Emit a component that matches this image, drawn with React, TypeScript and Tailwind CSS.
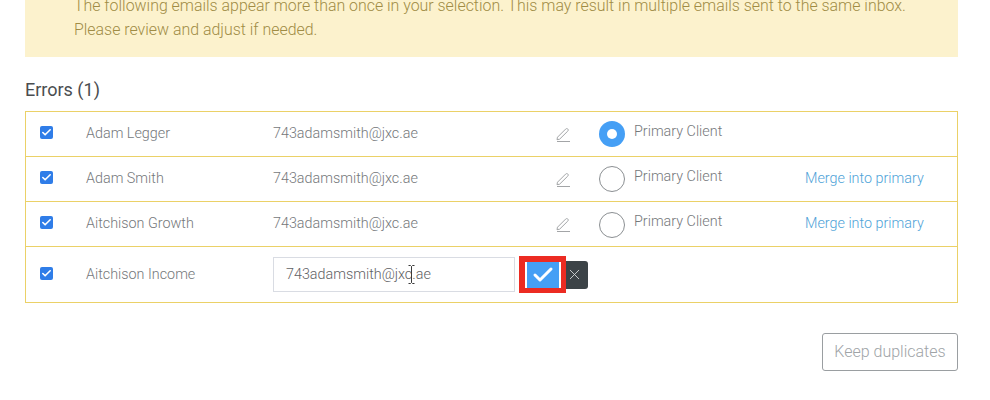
import { Check, X } from "lucide-react";

const rows = [
  { name: "Adam Legger", primary: true, extra: "" },
  { name: "Adam Smith", primary: false, extra: "" },
  { name: "Aitchison Growth", primary: false, extra: "pt-[1px]" },
];

function Checkbox() {
  return (
    <div className="flex h-[13px] w-[13px] items-center justify-center rounded-[2px] bg-[#2f7de8]">
      <Check size={11} strokeWidth={3.5} className="text-white" />
    </div>
  );
}

function Pencil() {
  return (
    <svg width="15" height="15" viewBox="0 0 15 15" fill="none" stroke="#a3a5a7" strokeWidth="1">
      <path d="M1.5 10.2 9.6 2.1c.7-.7 1.6-.7 2.2-.1.6.6.6 1.5-.1 2.2L3.6 12.2l-2.6.5.5-2.5Z" />
      <path d="M1 14.5h13" />
    </svg>
  );
}

function Radio({ on }: { on: boolean }) {
  if (on) {
    return (
      <div className="flex h-[26px] w-[26px] items-center justify-center rounded-full bg-[#459ff5]">
        <div className="h-[10px] w-[10px] rounded-full bg-white" />
      </div>
    );
  }
  return <div className="h-[26px] w-[26px] rounded-full border border-[#8b8f92] bg-white" />;
}

export default function App() {
  return (
    <div className="h-[400px] w-[990px] overflow-hidden bg-white px-[25px] font-['Roboto',sans-serif] font-light">
      <div className="flex h-[57px] w-[933px] flex-col justify-end overflow-hidden bg-[#fcf2cd] pb-[15px] pl-[49px] text-[15.92px] leading-[24px] text-[#a08c45]">
        <p className="whitespace-nowrap">
          The following emails appear more than once in your selection. This may result in multiple emails sent to the same inbox.
        </p>
        <p>Please review and adjust if needed.</p>
      </div>

      <h2 className="mt-[22px] h-[22px] text-[18px] leading-[22px] font-normal text-[#4a4d50]">Errors (1)</h2>

      <div className="mt-[10px] w-[933px] border border-[#ebd167] text-[14.35px] text-[#75787b]">
        {rows.map((row) => (
          <div key={row.name} className="flex h-[45px] items-center border-b border-[#ebd167] pl-[14px]">
            <div className="w-[46px] pb-[3px]">
              <Checkbox />
            </div>
            <div className="w-[187px]">{row.name}</div>
            <div className="w-[283px]">743adamsmith@jxc.ae</div>
            <div className="w-[43px] pt-[1px]">
              <Pencil />
            </div>
            <div className={`w-[35px] ${row.extra}`}>
              <Radio on={row.primary} />
            </div>
            <div className="w-[171px] pb-[5px]">Primary Client</div>
            {!row.primary && <div className="text-[#4fa3d8]">Merge into primary</div>}
          </div>
        ))}
        <div className="flex h-[55px] items-center pl-[14px]">
          <div className="w-[46px] pb-[3px]">
            <Checkbox />
          </div>
          <div className="w-[187px]">Aitchison Income</div>
          <div className="relative flex h-[35px] w-[242px] items-center border border-[#d9dce3] pl-[12px] text-[#5f6265]">
            743adamsmith@jxc.ae
            <svg className="absolute top-[7px] left-[134px]" width="7" height="19" viewBox="0 0 7 19" fill="none" stroke="#3a3a3a" strokeWidth="1">
              <path d="M0.5 0.5h2l1 1 1-1h2M3.5 1.5v16M0.5 18.5h2l1-1 1 1h2" />
            </svg>
          </div>
          <div className="ml-[4px] flex h-[37px] w-[47px] border-[6px] border-r-[5px] border-b-[5px] border-[#ec2b22] bg-white px-[2px]">
            <div className="flex flex-1 items-center justify-center bg-[#459ff5]">
              <Check size={24} strokeWidth={3} className="text-white" />
            </div>
          </div>
          <div className="flex h-[28px] w-[22px] items-center justify-center rounded-r-[3px] bg-[#3c4347] pr-[5px]">
            <X size={17} strokeWidth={1.25} className="text-[#d5d8da]" />
          </div>
        </div>
      </div>

      <div className="mt-[30px] flex w-[933px] justify-end">
        <button className="h-[38px] w-[136px] rounded-[3px] border border-[#9a9ea1] text-[16px] text-[#a0a4a7]">
          Keep duplicates
        </button>
      </div>
    </div>
  );
}
